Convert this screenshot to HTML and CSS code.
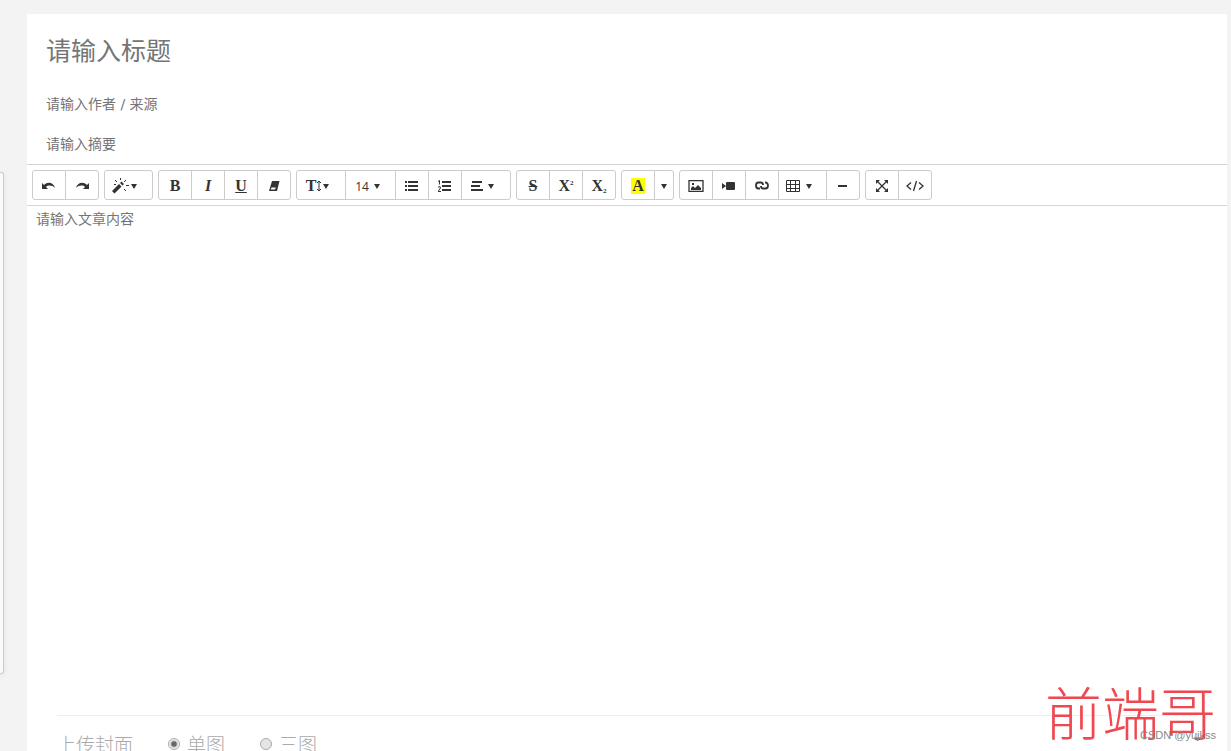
FILE: index.html
```html
<!DOCTYPE html>
<html lang="zh-CN">
<head>
<meta charset="utf-8">
<title>文章编辑</title>
<link rel="stylesheet" href="styles.css">
</head>
<body>
<aside class="side"></aside>
<main class="page">
  <input class="field title" type="text" placeholder="请输入标题" aria-label="标题">
  <input class="field" type="text" placeholder="请输入作者 / 来源" aria-label="作者 / 来源">
  <input class="field" type="text" placeholder="请输入摘要" aria-label="摘要">
  <section class="editor">
    <div class="toolbar">
      <div class="group">
        <button class="btn" type="button" aria-label="撤销"><svg width="16" height="14" viewBox="0 0 16 14"><path d="M1 4v6h6L5 8c2-2 6-2 9 1-1-5-7-7-11-3z"/></svg></button>
        <button class="btn" type="button" aria-label="重做"><svg width="16" height="14" viewBox="0 0 16 14"><path d="M15 4v6H9l2-2C9 6 5 6 2 9c1-5 7-7 11-3z"/></svg></button>
      </div>
      <div class="group">
        <button class="btn wide" type="button" aria-label="样式"><svg width="18" height="16" viewBox="0 0 18 16"><path d="M0 13l7-7 2.500 2.500-7 7zM8 5l1.500-1.500L12 6l-1.500 1.500z"/><path class="thin" d="M8.500 0v2M3 2l2 2M14 2l-2 2M2 6.500h2M14 7.500h3M12 11l2 2"/></svg><i class="caret"></i></button>
      </div>
      <div class="group">
        <button class="btn letter" type="button"><b>B</b></button>
        <button class="btn letter" type="button"><em>I</em></button>
        <button class="btn letter" type="button"><u>U</u></button>
        <button class="btn" type="button" aria-label="清除格式"><svg width="12" height="12" viewBox="0 0 12 12"><path fill-rule="evenodd" d="M4 1h7.500L9 11H1zM3.500 7.500L2.800 9.500H7l.8-2z"/></svg></button>
      </div>
      <div class="group">
        <button class="btn wider letter" type="button" aria-label="行高"><b>T</b><svg width="6" height="12" viewBox="0 0 6 12"><path class="thin" d="M3 1v10M1 3l2-2 2 2M1 9l2 2 2-2"/></svg><i class="caret"></i></button>
        <button class="btn size" type="button">14<i class="caret gap"></i></button>
        <button class="btn" type="button" aria-label="无序列表"><svg width="14" height="12" viewBox="0 0 14 12"><path d="M0 1h2v2H0zM3 1h10v2H3zM0 5h2v2H0zM3 5h10v2H3zM0 9h2v2H0zM3 9h10v2H3z"/></svg></button>
        <button class="btn" type="button" aria-label="有序列表"><svg width="14" height="12" viewBox="0 0 14 12"><path d="M4 1h9v2H4zM4 5h9v2H4zM4 9h9v2H4z"/><path class="thin" d="M0 1.500l1.500-1v4M0 7q3-1 2.500 1L0 11.500h3"/></svg></button>
        <button class="btn wider" type="button" aria-label="对齐"><svg width="12" height="12" viewBox="0 0 12 12"><path d="M1 1h10v2H1zM0 5h9v2H0zM0 9h12v2H0z"/></svg><i class="caret gap"></i></button>
      </div>
      <div class="group">
        <button class="btn letter" type="button"><s>S</s></button>
        <button class="btn letter" type="button"><b>X</b><sup>2</sup></button>
        <button class="btn letter" type="button"><b>X</b><sub>2</sub></button>
      </div>
      <div class="group">
        <button class="btn letter" type="button"><b class="mark">A</b></button>
        <button class="btn narrow" type="button" aria-label="更多颜色"><i class="caret"></i></button>
      </div>
      <div class="group">
        <button class="btn" type="button" aria-label="图片"><svg width="16" height="12" viewBox="0 0 16 12"><path class="line" d="M1 .5h14v11H1z"/><path d="M3 10V8l2-2 2 2 3-3 3 3v2zM4 3h2v2H4z"/></svg></button>
        <button class="btn" type="button" aria-label="视频"><svg width="14" height="10" viewBox="0 0 14 10"><path d="M0 2l4 3-4 3zM5 1h7q1 0 1 1v6q0 1-1 1H5q-1 0-1-1V2q0-1 1-1z"/></svg></button>
        <button class="btn" type="button" aria-label="链接"><svg width="14" height="10" viewBox="0 0 14 10"><path class="heavy" d="M8 4q0-2.500-2-2.500H3.500a2.500 3 0 0 0 0 6H5M6 5q0 2.500 2 2.500h2.500a2.500 3 0 0 0 0-6H10"/></svg></button>
        <button class="btn wide" type="button" aria-label="表格"><svg width="15" height="12" viewBox="0 0 15 12"><path class="thin" d="M.5.5h13v11H.5zM.5 4.500h13M.5 8.500h13M4.500.5v11M9.500.5v11"/></svg><i class="caret gap"></i></button>
        <button class="btn" type="button" aria-label="分割线"><svg width="10" height="10" viewBox="0 0 10 10"><path d="M0 4h9v2H0z"/></svg></button>
      </div>
      <div class="group">
        <button class="btn" type="button" aria-label="全屏"><svg width="12" height="12" viewBox="0 0 12 12"><path class="line" d="M1 1l10 10M11 1L1 11"/><path d="M0 0h4L0 4zM12 0v4L8 0zM12 12H8l4-4zM0 12V8l4 4z"/></svg></button>
        <button class="btn" type="button" aria-label="代码"><svg width="18" height="12" viewBox="0 0 18 12"><path class="line" d="M5 2.500L1 6l4 3.500M13 2.500L17 6l-4 3.500M10.500 1l-3 10"/></svg></button>
      </div>
    </div>
    <textarea class="content" placeholder="请输入文章内容" aria-label="文章内容"></textarea>
  </section>
  <fieldset class="cover">
    <legend class="hidden">封面</legend>
    <span class="caption">上传封面</span>
    <label class="choice"><input type="radio" name="cover" checked>单图</label>
    <label class="choice"><input type="radio" name="cover">三图</label>
  </fieldset>
</main>
<div class="brand">前端哥</div>
<div class="credit">CSDN @yujkss</div>
</body>
</html>
```
FILE: styles.css
```css
* { box-sizing: border-box; }

body {
  margin: 0;
  height: 100vh;
  overflow: hidden;
  position: relative;
  display: flex;
  align-items: flex-start;
  background: #f3f3f3;
  font-family: "DejaVu Sans", "Noto Sans CJK SC", sans-serif;
  color: #333;
}

.side {
  flex: none;
  width: 4px;
  height: 502px;
  margin-top: 172px;
  background: #fafafa;
  border: 1px solid #ccc;
  border-left: 0;
  border-radius: 0 3px 3px 0;
  box-shadow: 0 1px 4px #ddd;
}

.page {
  flex: 1;
  min-width: 0;
  min-height: 100vh;
  margin: 14px 4px 0 23px;
  background: #fff;
}

.field {
  display: block;
  width: 100%;
  height: 40px;
  padding: 0 19px;
  border: 0;
  background: none;
  font: inherit;
  font-size: 14px;
}

.title {
  height: 70px;
  padding-top: 4px;
  font-size: 25px;
}

.field::placeholder,
.content::placeholder {
  color: #757575;
  opacity: 1;
}

.editor { border-top: 1px solid #d5d5d5; }

.toolbar {
  display: flex;
  flex-wrap: wrap;
  gap: 5px;
  padding: 5px;
  border-bottom: 1px solid #d5d5d5;
}

.group { display: flex; }

.btn {
  display: flex;
  align-items: center;
  justify-content: center;
  width: 34px;
  height: 30px;
  padding: 2px 0 0;
  border: 1px solid #ccc;
  background: #fff;
  color: #333;
  font-family: "Liberation Sans", sans-serif;
  font-size: 12px;
}

.btn + .btn { margin-left: -1px; }
.btn:first-child { border-radius: 3px 0 0 3px; }
.btn:last-child { border-radius: 0 3px 3px 0; }
.btn:only-child { border-radius: 3px; }
.wide { width: 49px; padding-right: 8px; }
.wider { width: 50px; padding-right: 7px; }
.size { width: 51px; padding-right: 6px; font-family: "Open Sans", sans-serif; font-size: 12px; }
.narrow { width: 20px; }

.letter {
  font-family: "Liberation Serif", serif;
  font-size: 16px;
  font-weight: 700;
}

.letter sup,
.letter sub {
  font-size: 7px;
  line-height: 8px;
}

.letter sup { align-self: flex-start; margin-top: 6px; }
.letter sub { align-self: flex-end; margin-bottom: 4px; }

.mark {
  padding: 0 1px;
  background: #ff0;
  line-height: 16px;
}

.btn svg { fill: #333; }
.btn .line, .btn .thin, .btn .heavy { fill: none; stroke: #333; }
.btn .line { stroke-width: 1.3; }
.btn .heavy { stroke-width: 1.8; }

.caret {
  border: 3px solid transparent;
  border-top: 5px solid #333;
  border-bottom: 0;
  margin-left: 1px;
}

.narrow .caret { margin-left: 0; }
.gap { margin-left: 5px; }

.content {
  display: block;
  width: 100%;
  height: 494px;
  padding: 3px 9px;
  border: 0;
  background: none;
  resize: none;
  font: inherit;
  font-size: 14px;
  line-height: 20px;
}

.cover {
  display: flex;
  align-items: center;
  height: 56px;
  margin: 15px 30px 0;
  padding: 0;
  border: 0;
  border-top: 1px solid #eee;
  color: #aaa;
  font-size: 19px;
  font-weight: 300;
}

.caption { margin-right: 35px; }

.choice {
  display: flex;
  align-items: center;
  gap: 7px;
  margin-right: 35px;
}

.choice input {
  appearance: none;
  width: 12px;
  height: 12px;
  margin: 0;
  border: 1px solid #aaa;
  border-radius: 50%;
  background: #e5e5e5;
}

.choice input:checked { background: radial-gradient(circle, #666 2px, #eee 4px); }

.hidden {
  position: absolute;
  width: 1px;
  height: 1px;
  overflow: hidden;
  clip-path: inset(50%);
}

.brand {
  position: absolute;
  right: 15px;
  bottom: 4px;
  color: #f04850;
  font-size: 57px;
  font-weight: 300;
  line-height: 64px;
}

.credit {
  position: absolute;
  right: 15px;
  bottom: 8px;
  color: #888;
  font-family: "Liberation Sans", sans-serif;
  font-size: 11px;
  line-height: 16px;
}
```
